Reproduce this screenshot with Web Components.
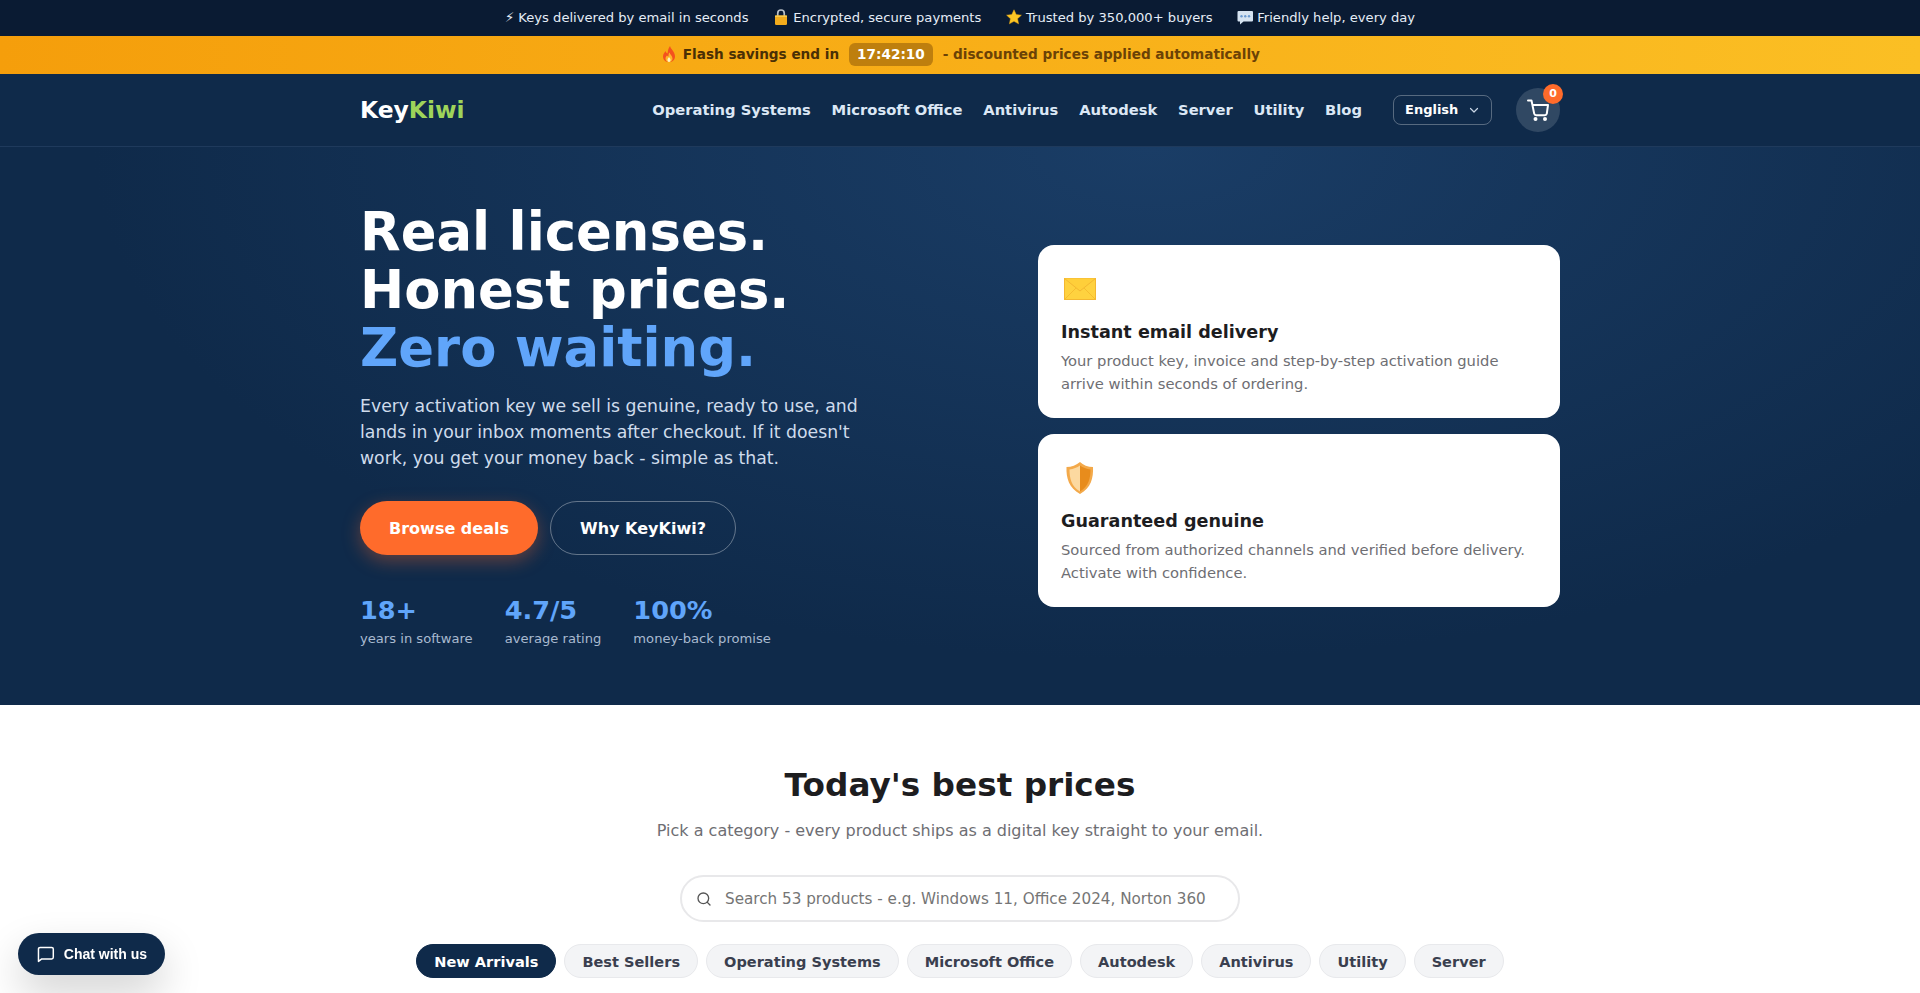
<!DOCTYPE html>
<html lang="en">
<head>
<meta charset="utf-8">
<title>KeyKiwi</title>
<style>
  html, body { margin: 0; padding: 0; background: #fff; overflow: hidden; }
  body { font-family: "DejaVu Sans", sans-serif; color: #1d1d1f; }
</style>
</head>
<body>
<kk-topbar>
  <span>⚡ Keys delivered by email in seconds</span>
  <span><kk-emoji name="lock" trim></kk-emoji> Encrypted, secure payments</span>
  <span><kk-emoji name="star" trim></kk-emoji> Trusted by 350,000+ buyers</span>
  <span><kk-emoji name="bubble" trim></kk-emoji> Friendly help, every day</span>
</kk-topbar>
<kk-flash time="17:42:10"><kk-emoji name="flame"></kk-emoji></kk-flash>
<kk-nav>
  <a>Operating Systems</a><a>Microsoft Office</a><a>Antivirus</a><a>Autodesk</a><a>Server</a><a>Utility</a><a>Blog</a>
</kk-nav>
<kk-hero>
  <kk-card slot="cards" heading="Instant email delivery"><kk-emoji slot="icon" name="envelope" size="38"></kk-emoji>Your product key, invoice and step-by-step activation guide arrive within seconds of ordering.</kk-card>
  <kk-card slot="cards" heading="Guaranteed genuine"><kk-emoji slot="icon" name="shield" size="38"></kk-emoji>Sourced from authorized channels and verified before delivery. Activate with confidence.</kk-card>
</kk-hero>
<kk-deals>
  <kk-pill active>New Arrivals</kk-pill>
  <kk-pill>Best Sellers</kk-pill>
  <kk-pill>Operating Systems</kk-pill>
  <kk-pill>Microsoft Office</kk-pill>
  <kk-pill>Autodesk</kk-pill>
  <kk-pill>Antivirus</kk-pill>
  <kk-pill>Utility</kk-pill>
  <kk-pill>Server</kk-pill>
</kk-deals>
<kk-chat></kk-chat>

<script>
const define = (name, html, attrs) => {
  customElements.define(name, class extends HTMLElement {
    constructor() {
      super();
      let out = html;
      (attrs || []).forEach(a => { out = out.split('{{' + a + '}}').join(this.getAttribute(a) || ''); });
      this.attachShadow({ mode: 'open' }).innerHTML = out;
    }
  });
};

// emoji shapes, drawn because the installed emoji font has other artwork
const EMOJI = {
  lock: [36, `<path d="M11.5 17v-6.5a6.5 6.5 0 0 1 13 0V17" fill="none" stroke="#b9c0c7" stroke-width="3.4"/>
    <rect x="6" y="15" width="24" height="19" rx="2.5" fill="#f2ab1c"/><rect x="6" y="15" width="24" height="3" fill="#f9c94a"/>`],
  star: [36, `<path d="M18 3.5l4.4 9.6 10.4 1.2-7.7 7.1 2.1 10.3L18 26.6 8.8 31.7l2.1-10.3-7.7-7.1 10.4-1.2z" fill="#fcc624" stroke="#e5a312" stroke-width="1"/>`],
  bubble: [36, `<path d="M5 6h27a2 2 0 0 1 2 2v17a2 2 0 0 1-2 2H15l-7 6v-6H5a2 2 0 0 1-2-2V8a2 2 0 0 1 2-2z" fill="#d5e3f1"/>
    <circle cx="11" cy="16.5" r="2.4" fill="#6b9bd1"/><circle cx="18.5" cy="16.5" r="2.4" fill="#6b9bd1"/><circle cx="26" cy="16.5" r="2.4" fill="#6b9bd1"/>`],
  flame: [36, `<path d="M20 2c1 6 10 11 10 21 0 7-5 11-12 11S6 30 6 23c0-5 3-8 5-11 1 3 2 4 4 5 1-5 1-10 5-15z" fill="#f4511e"/>
    <path d="M19 15c1 4 6 7 6 12 0 4-3 7-7 7s-7-3-7-7c0-3 2-5 3-6 1 1 2 2 3 2 0-3 0-6 2-8z" fill="#fdb52a"/>
    <path d="M18 24c1 2 3 3 3 6 0 2-1 4-3 4s-3-2-3-4c0-3 2-4 3-6z" fill="#fff3c4"/>`],
  envelope: [38, `<rect x="3.5" y="8.5" width="31" height="21" fill="#ffd23f" stroke="#f4b731"/>
    <path d="M3.5 29.5L15 18M34.5 29.5L23 18" stroke="#f6bd30" fill="none"/>
    <path d="M3.5 8.5L19 21 34.5 8.5" fill="#ffcf3a" stroke="#f4b731"/>`],
  shield: [38, `<path d="M19 3c3 3 8 5 13 5 .5 11-2 21-13 27C8 29 5 19 5.500 8c5 0 10-2 13.500-5z" fill="#f3a94a"/>
    <path d="M19 6.500c-3 2-6.500 3.500-10.500 4 0 9 2 17 10.500 22z" fill="#fcd9a0"/>
    <path d="M19 6.500c3 2 6.500 3.500 10.500 4 0 9-2 17-10.500 22z" fill="#e88c1c"/>`]
};

customElements.define('kk-emoji', class extends HTMLElement {
  constructor() {
    super();
    const size = this.getAttribute('size') || 18;
    const trim = this.hasAttribute('trim') ? 1.5 : 0;
    const [box, art] = EMOJI[this.getAttribute('name')];
    this.attachShadow({ mode: 'open' }).innerHTML = `
      <style>
        :host { display: inline-block; width: ${size - trim}px; height: ${size}px; vertical-align: -4px; }
        svg { display: block; margin-left: ${-trim / 2}px; }
      </style>
      <svg width="${size}" height="${size}" viewBox="0 0 ${box} ${box}">${art}</svg>`;
  }
});

define('kk-topbar', `
  <style>
    :host { display: flex; justify-content: center; align-items: center; gap: 24px; box-sizing: border-box; height: 36px; padding-bottom: 2px;
      background: #0a1b33; color: #e5edf7; font-size: 13.12px; }
    ::slotted(span) { white-space: nowrap; }
  </style>
  <slot></slot>`);

define('kk-flash', `
  <style>
    :host { display: flex; justify-content: center; align-items: center; gap: 10px; box-sizing: border-box; height: 38px; padding-bottom: 2px;
      background: linear-gradient(90deg, #f59e0b, #fbbf24); color: #6b4206; font-size: 13.6px; font-weight: 700; }
    b { color: #4a2f05; }
    .time { background: rgba(120, 72, 4, .45); color: #fff; border-radius: 6px; padding: 0 8px; height: 23px; line-height: 23px; }
  </style>
  <b><slot></slot> Flash savings end in</b><span class="time">{{time}}</span><span>- discounted prices applied automatically</span>`, ['time']);

define('kk-nav', `
  <style>
    :host { display: block; background: #0f2a4a; border-bottom: 1px solid #1f3a5c; box-sizing: border-box; height: 73px; padding-bottom: 1px; }
    .wrap { width: 1200px; height: 100%; margin: 0 auto; display: flex; align-items: center; }
    .logo { font-size: 23.4px; font-weight: 700; color: #fff; margin-right: auto; }
    .logo span { color: #9ed45a; }
    .links { display: flex; gap: 20.8px; margin-right: 31px; }
    ::slotted(a) { color: #dbe7f5; font-size: 14.72px; font-weight: 700; white-space: nowrap; }
    .lang { box-sizing: border-box; width: 99px; height: 30px; border: 1px solid rgba(255,255,255,.3); border-radius: 8px;
      display: flex; align-items: center; padding: 0 11px; justify-content: space-between; color: #fff; font-size: 13px; font-weight: 700;
      margin-right: 24px; }
    .cart { position: relative; width: 44px; height: 44px; border-radius: 50%; background: rgba(255,255,255,.14);
      display: flex; align-items: center; justify-content: center; }
    .badge { position: absolute; top: -4px; right: -3px; width: 20px; height: 20px; border-radius: 50%; background: #ff6b2b;
      color: #fff; font-size: 11px; font-weight: 700; display: flex; align-items: center; justify-content: center; }
  </style>
  <div class="wrap">
    <div class="logo">Key<span>Kiwi</span></div>
    <nav class="links"><slot></slot></nav>
    <div class="lang">English
      <svg width="12" height="12" viewBox="0 0 24 24" fill="none" stroke="#c9d6e6" stroke-width="2.4" stroke-linecap="round" stroke-linejoin="round"><path d="M5 9l7 7 7-7"/></svg>
    </div>
    <div class="cart">
      <svg width="24" height="24" viewBox="0 0 24 24" fill="none" stroke="#fff" stroke-width="2" stroke-linecap="round" stroke-linejoin="round">
        <circle cx="9.500" cy="21" r="1"/><circle cx="19" cy="21" r="1"/>
        <path d="M2 2.500h3.500L8.200 15.600a2 2 0 0 0 2 1.600h8.600a2 2 0 0 0 2-1.600L22 7H6.300"/>
      </svg>
      <span class="badge">0</span>
    </div>
  </div>`);

define('kk-hero', `
  <style>
    :host { display: block; height: 558px; background: radial-gradient(ellipse at 60% 0%, #1a3d66 0%, #0f2a4a 65%); color: #fff; }
    .wrap { box-sizing: border-box; width: 1200px; height: 100%; margin: 0 auto; display: grid; grid-template-columns: 1fr 522px; column-gap: 52px; align-items: center; }
    h1 { margin: 0 0 16px; font-size: 52.8px; line-height: 58px; font-weight: 700; }
    h1 span { color: #60a5fa; }
    p { margin: 0 0 30px; width: 520px; font-size: 17.28px; line-height: 26px; color: #cfdcec; }
    .btns { display: flex; gap: 12px; margin-bottom: 40px; }
    .btn { box-sizing: border-box; height: 54px; border-radius: 27px; display: flex; align-items: center; justify-content: center; font-size: 16px; font-weight: 700; color: #fff; }
    .primary { width: 178px; background: #ff6b2b; box-shadow: 0 6px 18px rgba(255,107,43,.35); }
    .ghost { width: 186px; border: 1px solid rgba(255,255,255,.35); }
    .stats { display: flex; gap: 32px; }
    .num { font-size: 25.6px; font-weight: 700; color: #60a5fa; line-height: 30px; }
    .lbl { font-size: 13.12px; color: #a9bad0; line-height: 20px; margin-top: 4px; }
    .cards { display: flex; flex-direction: column; gap: 16px; }
  </style>
  <div class="wrap">
    <div class="intro">
      <h1>Real licenses.<br>Honest prices.<br><span>Zero waiting.</span></h1>
      <p>Every activation key we sell is genuine, ready to use, and lands in your inbox moments after checkout. If it doesn't work, you get your money back - simple as that.</p>
      <div class="btns"><div class="btn primary">Browse deals</div><div class="btn ghost">Why KeyKiwi?</div></div>
      <div class="stats">
        <div><div class="num">18+</div><div class="lbl">years in software</div></div>
        <div><div class="num">4.7/5</div><div class="lbl">average rating</div></div>
        <div><div class="num">100%</div><div class="lbl">money-back promise</div></div>
      </div>
    </div>
    <div class="cards"><slot name="cards"></slot></div>
  </div>`);

define('kk-card', `
  <style>
    :host { display: block; box-sizing: border-box; height: 173px; background: #fff; border-radius: 16px; padding: 25px 23px 0; color: #1d1d1f; }
    .icon { height: 38px; margin-bottom: 12px; }
    h3 { margin: 0 0 6px; font-size: 17.6px; line-height: 24px; font-weight: 700; color: #1d1d1f; }
    p { margin: 0; font-size: 14.72px; line-height: 22.8px; color: #6e6e73; }
  </style>
  <div class="icon"><slot name="icon"></slot></div>
  <h3>{{heading}}</h3>
  <p><slot></slot></p>`, ['heading']);

define('kk-pill', `
  <style>
    :host { display: flex; align-items: center; box-sizing: border-box; height: 34px; padding: 0 17px; border-radius: 17px;
      background: #f3f4f6; border: 1px solid #e8e9ec; color: #3a3f4f; font-size: 14.56px; font-weight: 700; white-space: nowrap; }
    :host([active]) { background: #0f2a4a; border-color: #0f2a4a; color: #fff; }
  </style>
  <slot></slot>`);

define('kk-deals', `
  <style>
    :host { display: block; padding-top: 56px; height: 288px; box-sizing: border-box; text-align: center; }
    h2 { margin: 0; font-size: 32.7px; line-height: 48px; font-weight: 700; color: #1d1d1f; }
    .sub { margin: 10px 0 0; font-size: 16px; line-height: 24px; color: #6e6e73; }
    .search { box-sizing: border-box; width: 560px; height: 47px; margin: 32px auto 22px; border: 2px solid #e8e8ea; border-radius: 24px;
      display: flex; align-items: center; padding: 0 14px; gap: 13px; color: #757575; font-size: 15.2px; white-space: nowrap; }
    .pills { display: flex; justify-content: center; gap: 8px; }
  </style>
  <h2>Today's best prices</h2>
  <div class="sub">Pick a category - every product ships as a digital key straight to your email.</div>
  <div class="search">
    <svg width="16" height="16" viewBox="0 0 24 24" fill="none" stroke="#555" stroke-width="2" stroke-linecap="round"><circle cx="11" cy="11" r="8"/><path d="M21 21l-4.300-4.300"/></svg>
    <span>Search 53 products - e.g. Windows 11, Office 2024, Norton 360</span>
  </div>
  <div class="pills"><slot></slot></div>`);

define('kk-chat', `
  <style>
    :host { position: fixed; left: 18px; bottom: 18px; display: flex; align-items: center; gap: 8px; box-sizing: border-box; width: 147px; height: 42px;
      padding: 0 18px; border-radius: 21px; background: #0f2a4a; color: #fff; font-family: "Liberation Sans", sans-serif; font-size: 14px; font-weight: 700;
      box-shadow: 0 18px 40px rgba(0,0,0,.18); white-space: nowrap; }
  </style>
  <svg width="20" height="20" viewBox="0 0 24 24" fill="none" stroke="#fff" stroke-width="1.800" stroke-linecap="round" stroke-linejoin="round"><path d="M3 21V6a2 2 0 0 1 2-2h14a2 2 0 0 1 2 2v10a2 2 0 0 1-2 2H7z"/></svg>
  <span>Chat with us</span>`);
</script>
</body>
</html>
